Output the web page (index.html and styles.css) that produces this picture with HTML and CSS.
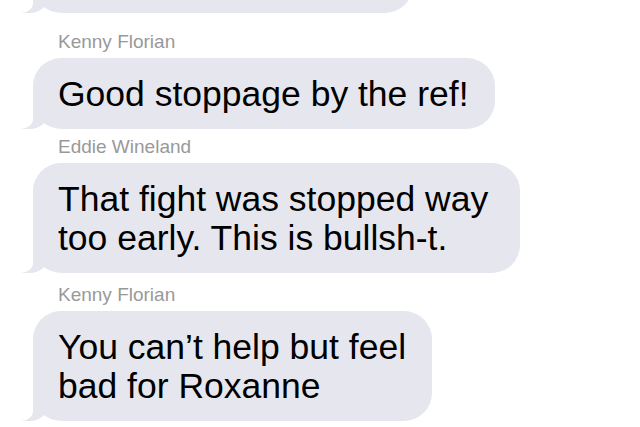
FILE: index.html
```html
<!DOCTYPE html>
<html lang="en">
<head>
  <meta charset="UTF-8" />
  <meta name="viewport" content="width=device-width, initial-scale=1.0"/>
  <title>Group chat</title>
  <link rel="stylesheet" href="styles.css">
</head>
<body>
  <div class="thread">
    <div class="msg first">
      <div class="bubble cut">&nbsp;</div>
    </div>

    <div class="msg gap-lg">
      <div class="name">Kenny Florian</div>
      <div class="bubble">Good stoppage by the ref!</div>
    </div>

    <div class="msg gap-sm">
      <div class="name">Eddie Wineland</div>
      <div class="bubble wide">That fight was stopped way<br>too early. This is bullsh-t.</div>
    </div>

    <div class="msg gap-md">
      <div class="name">Kenny Florian</div>
      <div class="bubble">You can’t help but feel<br>bad for Roxanne</div>
    </div>
  </div>
</body>
</html>
```

FILE: styles.css
```css
body {
  margin: 0;
  background-color: #fff;
  font-family: "Liberation Sans", Arial, sans-serif;
  overflow: hidden;
}
.thread {
  padding-left: 33px;
}
.msg {
  display: flex;
  flex-direction: column;
  align-items: flex-start;
}
.msg.first {
  margin-top: -58px;
}
.msg.gap-lg {
  margin-top: 18px;
}
.msg.gap-sm {
  margin-top: 7px;
}
.msg.gap-md {
  margin-top: 11px;
}
.name {
  font-size: 19px;
  line-height: 22px;
  color: #999;
  margin: 0 0 5px 25px;
}
.bubble {
  position: relative;
  background-color: #e6e7ee;
  color: #000;
  font-size: 35.5px;
  line-height: 39px;
  padding: 17px 26px 15px 25px;
  border-radius: 28px;
}
.bubble.wide {
  padding-right: 32px;
}
.bubble.cut {
  width: 329px;
}
/* tail */
.bubble::before {
  content: "";
  position: absolute;
  z-index: 0;
  bottom: 0;
  left: -13px;
  width: 28px;
  height: 26px;
  background-color: #e6e7ee;
  border-bottom-right-radius: 18px 16px;
}
.bubble::after {
  content: "";
  position: absolute;
  z-index: 1;
  bottom: 0;
  left: -23px;
  width: 23px;
  height: 28px;
  background-color: #fff;
  border-bottom-right-radius: 12px 10px;
}
```
